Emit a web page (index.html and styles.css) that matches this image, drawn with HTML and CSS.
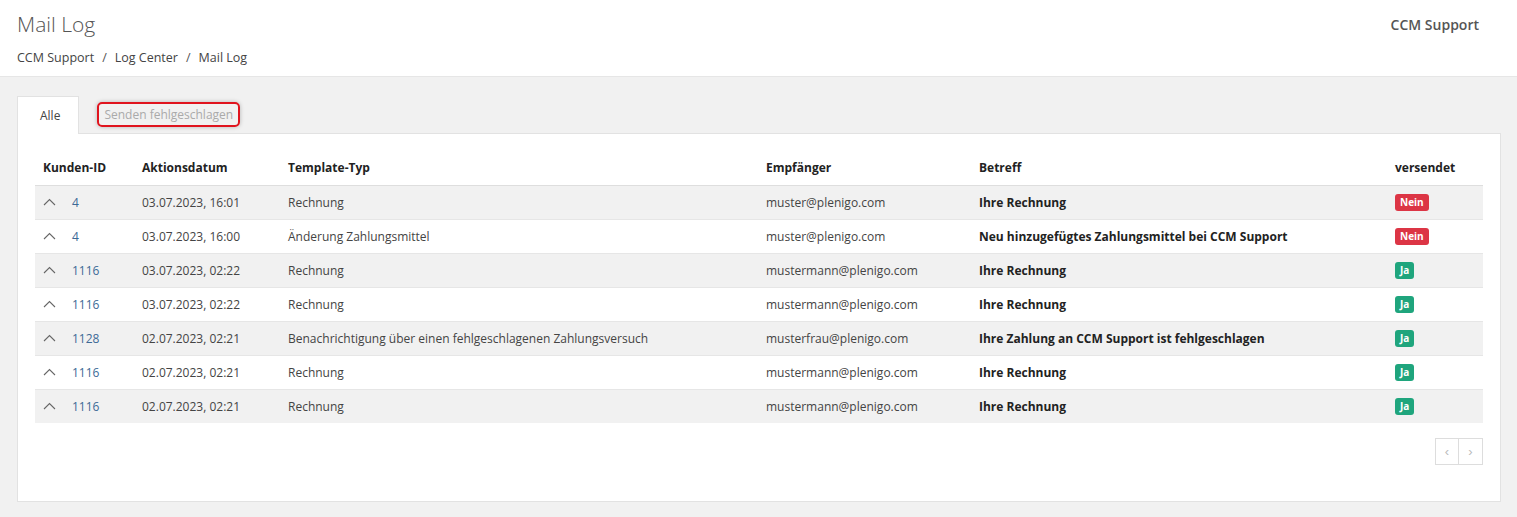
FILE: index.html
```html
<!DOCTYPE html>
<html lang="de">
<head>
	<meta charset="UTF-8">
	<meta name="viewport" content="width=device-width, initial-scale=1.0">
	<title>Mail Log</title>
	<link rel="stylesheet" href="styles.css">
</head>
<body>
	<header class="cabecalho">
		<div class="titulo">
			<h1>Mail Log</h1>
			<nav class="breadcrumb">
				<span>CCM Support</span><span class="sep">/</span><span>Log Center</span><span class="sep">/</span><span>Mail Log</span>
			</nav>
		</div>
		<div class="conta">CCM Support</div>
	</header>
	<main class="principal">
		<ul class="tabs">
			<li class="tab ativo">Alle</li>
			<li class="tab"><span class="foco">Senden fehlgeschlagen</span></li>
		</ul>
		<div class="card">
			<table class="tabela">
				<colgroup>
					<col style="width:99px">
					<col style="width:146px">
					<col style="width:478px">
					<col style="width:213px">
					<col style="width:416px">
					<col>
				</colgroup>
				<thead>
					<tr>
						<th>Kunden-ID</th>
						<th>Aktionsdatum</th>
						<th>Template-Typ</th>
						<th>Empfänger</th>
						<th>Betreff</th>
						<th>versendet</th>
					</tr>
				</thead>
				<tbody>
					<tr>
						<td><span class="seta"><svg width="13" height="8" viewBox="0 0 13 8"><path d="M1 7L6.5 1.5L12 7" fill="none" stroke="#666" stroke-width="1.1"/></svg></span><a href="#">4</a></td>
						<td>03.07.2023, 16:01</td>
						<td>Rechnung</td>
						<td>muster@plenigo.com</td>
						<td class="negrito">Ihre Rechnung</td>
						<td><span class="badge nao">Nein</span></td>
					</tr>
					<tr>
						<td><span class="seta"><svg width="13" height="8" viewBox="0 0 13 8"><path d="M1 7L6.5 1.5L12 7" fill="none" stroke="#666" stroke-width="1.1"/></svg></span><a href="#">4</a></td>
						<td>03.07.2023, 16:00</td>
						<td>Änderung Zahlungsmittel</td>
						<td>muster@plenigo.com</td>
						<td class="negrito">Neu hinzugefügtes Zahlungsmittel bei CCM Support</td>
						<td><span class="badge nao">Nein</span></td>
					</tr>
					<tr>
						<td><span class="seta"><svg width="13" height="8" viewBox="0 0 13 8"><path d="M1 7L6.5 1.5L12 7" fill="none" stroke="#666" stroke-width="1.1"/></svg></span><a href="#">1116</a></td>
						<td>03.07.2023, 02:22</td>
						<td>Rechnung</td>
						<td>mustermann@plenigo.com</td>
						<td class="negrito">Ihre Rechnung</td>
						<td><span class="badge sim">Ja</span></td>
					</tr>
					<tr>
						<td><span class="seta"><svg width="13" height="8" viewBox="0 0 13 8"><path d="M1 7L6.5 1.5L12 7" fill="none" stroke="#666" stroke-width="1.1"/></svg></span><a href="#">1116</a></td>
						<td>03.07.2023, 02:22</td>
						<td>Rechnung</td>
						<td>mustermann@plenigo.com</td>
						<td class="negrito">Ihre Rechnung</td>
						<td><span class="badge sim">Ja</span></td>
					</tr>
					<tr>
						<td><span class="seta"><svg width="13" height="8" viewBox="0 0 13 8"><path d="M1 7L6.5 1.5L12 7" fill="none" stroke="#666" stroke-width="1.1"/></svg></span><a href="#">1128</a></td>
						<td>02.07.2023, 02:21</td>
						<td>Benachrichtigung über einen fehlgeschlagenen Zahlungsversuch</td>
						<td>musterfrau@plenigo.com</td>
						<td class="negrito">Ihre Zahlung an CCM Support ist fehlgeschlagen</td>
						<td><span class="badge sim">Ja</span></td>
					</tr>
					<tr>
						<td><span class="seta"><svg width="13" height="8" viewBox="0 0 13 8"><path d="M1 7L6.5 1.5L12 7" fill="none" stroke="#666" stroke-width="1.1"/></svg></span><a href="#">1116</a></td>
						<td>02.07.2023, 02:21</td>
						<td>Rechnung</td>
						<td>mustermann@plenigo.com</td>
						<td class="negrito">Ihre Rechnung</td>
						<td><span class="badge sim">Ja</span></td>
					</tr>
					<tr>
						<td><span class="seta"><svg width="13" height="8" viewBox="0 0 13 8"><path d="M1 7L6.5 1.5L12 7" fill="none" stroke="#666" stroke-width="1.1"/></svg></span><a href="#">1116</a></td>
						<td>02.07.2023, 02:21</td>
						<td>Rechnung</td>
						<td>mustermann@plenigo.com</td>
						<td class="negrito">Ihre Rechnung</td>
						<td><span class="badge sim">Ja</span></td>
					</tr>
				</tbody>
			</table>
			<div class="paginacao">
				<button type="button" class="pag">&lsaquo;</button><button type="button" class="pag">&rsaquo;</button>
			</div>
		</div>
	</main>
</body>
</html>
```

FILE: styles.css
```css
* {
	margin: 0;
	padding: 0;
	box-sizing: border-box;
}
body {
	font-family: "Open Sans", Arial, sans-serif;
	font-size: 12px;
	color: #333;
	background-color: #f1f1f1;
}
.cabecalho {
	display: flex;
	justify-content: space-between;
	background-color: white;
	border-bottom: 1px solid #e6e6e6;
	height: 77px;
	padding: 10px 38px 0 17px;
}
.cabecalho h1 {
	font-size: 21px;
	font-weight: 300;
	color: #555;
	line-height: 28px;
}
.breadcrumb {
	margin-top: 11px;
	font-size: 12.5px;
	color: #444;
}
.breadcrumb .sep {
	margin: 0 8px;
	color: #555;
}
.conta {
	font-size: 14px;
	font-weight: 600;
	color: #555;
	padding-top: 5px;
}
.principal {
	padding: 19px 16px 14px 17px;
}
.tabs {
	display: flex;
	align-items: stretch;
	list-style: none;
	height: 37px;
}
.tab {
	padding: 0 17px;
	display: flex;
	align-items: center;
	color: #aaa;
}
.tab.ativo {
	background-color: white;
	border: 1px solid #e2e2e2;
	border-bottom: none;
	color: #444;
	padding: 0 18px 0 22px;
	margin-bottom: -1px;
	position: relative;
}
.foco {
	border: 2px solid #e0141e;
	border-radius: 5px;
	padding: 2px 5px;
	box-shadow: 0 0 4px rgba(0, 0, 0, 0.25);
	margin-left: 1px;
}
.card {
	background-color: white;
	border: 1px solid #e2e2e2;
	padding: 16px 17px 38px 17px;
	height: 369px;
}
.tabela {
	width: 100%;
	border-collapse: collapse;
	table-layout: fixed;
}
.tabela th {
	text-align: left;
	font-weight: 700;
	color: #222;
	padding: 0 8px;
	height: 35px;
	border-bottom: 1px solid #dedede;
}
.tabela td {
	padding: 0 8px;
	height: 34px;
	white-space: nowrap;
	border-top: 1px solid #e6e6e6;
	color: #444;
}
.tabela tbody tr:nth-child(odd) td {
	background-color: #f1f1f1;
}
.tabela a {
	color: #3d6996;
	text-decoration: none;
}
.seta {
	display: inline-block;
	width: 29px;
	vertical-align: 1px;
}
.negrito {
	font-weight: 700;
	color: #222 !important;
}
.badge {
	display: inline-block;
	font-size: 10px;
	font-weight: 700;
	color: white;
	padding: 2px 5px;
	border-radius: 3px;
	line-height: 13px;
}
.nao {
	background-color: #dc3545;
}
.sim {
	background-color: #1fa57d;
}
.paginacao {
	display: flex;
	justify-content: flex-end;
	margin-top: 15px;
}
.pag {
	width: 24px;
	height: 27px;
	background: white;
	border: 1px solid #ddd;
	color: #bbb;
	font-size: 13px;
	cursor: pointer;
}
.pag + .pag {
	border-left: none;
}
```
